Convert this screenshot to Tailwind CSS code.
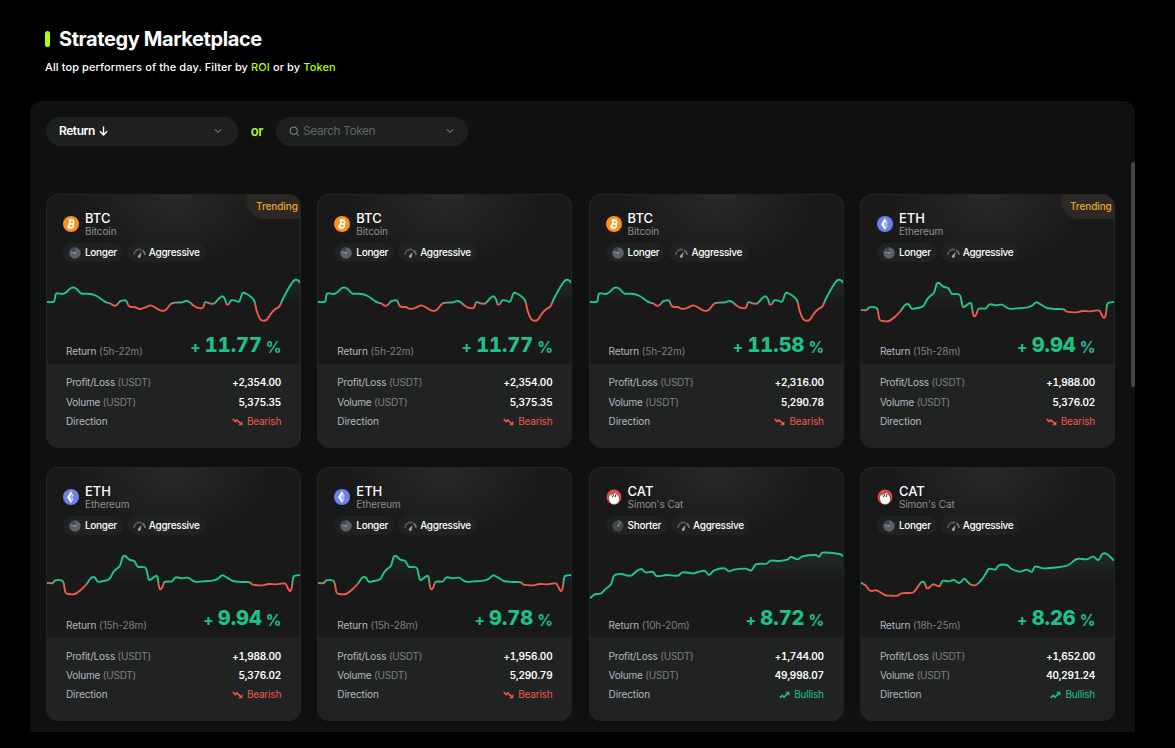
<!DOCTYPE html>
<html lang="en">

<head>
  <meta charset="UTF-8">
  <meta name="viewport" content="width=device-width, initial-scale=1.0">
  <title>Strategy Marketplace</title>
  <script src="https://cdn.jsdelivr.net/npm/@tailwindcss/browser@4"></script>
</head>

<body class="h-screen overflow-hidden bg-black font-[Inter,sans-serif] text-white">
  <!-- Icon sprite -->
  <svg class="hidden">
    <symbol id="coin-btc" viewBox="0 0 16 16">
      <circle cx="8" cy="8" r="8" fill="#f7931a"/>
      <g transform="rotate(13 8 8)" fill="none" stroke="#fff">
        <path d="M6.4 4.6h2.3a1.6 1.6 0 0 1 0 3.3H6.4h2.8a1.75 1.75 0 0 1 0 3.5H6.4z" stroke-width="1.6"/>
        <path d="M4.6 4.6h2M4.6 11.4h2" stroke-width="1.4"/>
        <path d="M7.1 2.6v2M9 2.6v2M7.1 11.4v2M9 11.4v2" stroke-width="1.1"/>
      </g>
    </symbol>
    <symbol id="coin-eth" viewBox="0 0 16 16">
      <circle cx="8" cy="8" r="8" fill="#6b83e8"/>
      <path d="M8 2 4 8.2 8 14z" fill="#fff"/>
      <path d="M8 2v4.2l3.2 1.6zM8 14v-3l3.2-2z" fill="#fff" fill-opacity=".75"/>
      <path d="M10.4 7.4 8.6 6.7a1.5 1.5 0 0 0 0 3l1.8-.7" fill="none" stroke="#6b83e8" stroke-width=".8"/>
      <path d="M9 6.6v3.2" stroke="#fff" stroke-width=".8"/>
    </symbol>
    <symbol id="coin-cat" viewBox="0 0 16 16">
      <circle cx="8" cy="8" r="7.4" fill="#f04a3e"/>
      <path d="M2.6 9.2C2.6 7 3.6 5.8 4.6 4.2L6.6 5 10.6 3l.9 2.6c1 1.2 2 2.6 2 4.6 0 3.2-2.4 5.3-5.5 5.3s-5.4-2.6-5.4-6.3z" fill="#fff" stroke="#2a1a1a" stroke-width=".5"/>
      <path d="M4.9 5.2l.4 1.3M7.3 5.4v1.8M10.3 4.6 9.4 6.8" stroke="#111" stroke-width=".9" fill="none"/>
      <circle cx="6.4" cy="7.6" r=".55" fill="#111"/>
      <circle cx="9.2" cy="7.4" r=".55" fill="#111"/>
    </symbol>
    <symbol id="longer" viewBox="0 0 12 12">
      <circle cx="6" cy="6" r="5.7" fill="#5c6169"/>
      <path d="M6 6V.3A5.7 5.7 0 0 0 .8 3.8z" fill="#41464b"/>
      <path d="M6 6 2.2 4.9" stroke="#9097a0" stroke-width=".9" stroke-linecap="round"/>
      <circle cx="6" cy="6" r=".8" fill="#a9afb8"/>
    </symbol>
    <symbol id="shorter" viewBox="0 0 12 12">
      <circle cx="6" cy="6" r="5.7" fill="#41464b"/>
      <path d="M6 6V.3a5.7 5.7 0 0 1 4.1 1.7z" fill="#5c6169"/>
      <path d="M6 6l2.8-2.8" stroke="#9097a0" stroke-width=".9" stroke-linecap="round"/>
      <circle cx="6" cy="6" r=".8" fill="#a9afb8"/>
    </symbol>
    <symbol id="gauge" viewBox="0 0 13 11">
      <path d="M1 8a5.5 5.5 0 0 1 7.4-5.2" fill="none" stroke="#565b62" stroke-width="1.6"/>
      <path d="M9.3 3.2A5.5 5.5 0 0 1 12 8" fill="none" stroke="#6b7179" stroke-width="1.6"/>
      <path d="M8.6 5 7.8 9.2a1.5 1.5 0 1 1-2.3-1z" fill="#9aa1aa"/>
    </symbol>
    <symbol id="bearish" viewBox="0 0 11 8">
      <path d="M.7 1l2.6 2.6L4.8 1.9 8.8 5.8" fill="none" stroke="currentColor" stroke-width="1.6"/>
      <path d="M10.4 2.9v4.3H6.2z" fill="currentColor"/>
    </symbol>
    <symbol id="bullish" viewBox="0 0 11 8">
      <path d="M.7 6.8l2.6-2.5 1.7 1.9L8.8 2.2" fill="none" stroke="currentColor" stroke-width="1.6"/>
      <path d="M10.4 5V.8H6.2z" fill="currentColor"/>
    </symbol>
    <symbol id="chevron" viewBox="0 0 8 6">
      <path d="M.8 1.2 4 4.5l3.2-3.3" fill="none" stroke="currentColor" stroke-width="1"/>
    </symbol>
  </svg>

  <!-- Page heading -->
  <header class="h-[101px] pt-7 pl-[45px]">
    <h1 class="flex h-[22px] items-center gap-[9px] text-[20px] font-bold tracking-[-0.4px]">
      <span class="h-4 w-[5px] rounded-full bg-[#b2ff00]"></span>
      Strategy Marketplace
    </h1>
    <p class="mt-[9px] text-[11px] leading-4 font-medium tracking-[0.1px]">All top performers of the day. Filter by <span class="text-[#b2ff00]">ROI</span> or by <span class="text-[#b2ff00]">Token</span></p>
  </header>

  <!-- Marketplace panel -->
  <main class="relative ml-[30px] h-[631px] w-[1105px] rounded-t-xl bg-[#0f1110] pt-4 pl-4">
    <!-- Filters -->
    <div class="flex h-[29px] items-center text-[12px]">
      <button class="flex h-full w-48 items-center rounded-full bg-[#1e201f] pr-4 pb-px pl-[13px] font-semibold tracking-[-0.45px]">
        Return
        <svg class="ml-1 h-[10px] w-[9px]" viewBox="0 0 9 10" fill="none" stroke="currentColor" stroke-width="1.4"><path d="M4.5.5v8.3M.9 5.3l3.6 3.6 3.6-3.6"/></svg>
        <svg class="ml-auto h-[6px] w-2 text-[#8b949c]"><use href="#chevron"/></svg>
      </button>
      <span class="w-[38px] text-center text-[13px] font-semibold tracking-[-0.3px] text-[#b2ff00]">or</span>
      <button class="flex h-full w-48 items-center rounded-full bg-[#1e201f] pr-[14px] pb-px pl-[13px] tracking-[-0.45px] text-[#60646a]">
        <svg class="mr-[3px] h-[11px] w-[11px]" viewBox="0 0 11 11" fill="none" stroke="#8b949c" stroke-width="1"><circle cx="4.7" cy="4.7" r="3.7"/><path d="M7.4 7.4l2.9 2.6"/></svg>
        Search Token
        <svg class="ml-auto h-[6px] w-2 text-[#8b949c]"><use href="#chevron"/></svg>
      </button>
    </div>

    <!-- Strategy cards, filled from the list below -->
    <div id="cards" class="mt-12 grid w-[1069px] grid-cols-4 gap-x-[16.2px] gap-y-[19.3px]"></div>

    <!-- Scrollbar thumb -->
    <div class="absolute top-[61px] right-0 h-[225px] w-1 rounded-full bg-[#434645]"></div>
  </main>

  <script>
    // Chart points are in thirds of a pixel, measured from the card's corner
    const charts = {
      btc: { base: 326, pts: [3,324, 18,324, 25,321, 29,301, 35,298, 50,300, 62,294, 75,282, 88,282, 105,298, 120,299, 134,300, 152,306, 168,317, 180,325, 192,328, 204,335, 212,333, 222,322, 234,319, 241,321, 249,337, 265,339, 280,345, 296,341, 314,334, 328,341, 345,350, 359,348, 374,330, 390,326, 408,325, 420,321, 430,324, 444,336, 458,342, 471,341, 477,325, 490,328, 505,328, 520,312, 530,307, 537,316, 541,330, 547,331, 556,319, 567,320, 580,322, 589,298, 602,300, 615,309, 625,322, 632,352, 642,375, 650,380, 662,377, 675,358, 688,345, 700,337, 710,315, 725,287, 737,268, 746,258, 757,260, 762,267] },
      eth: { base: 349, pts: [3,348, 20,348, 28,340, 46,340, 53,348, 58,375, 67,381, 87,381, 104,369, 122,351, 135,333, 146,331, 155,344, 170,342, 190,336, 202,315, 212,305, 222,296, 230,270, 237,267, 250,278, 265,283, 275,299, 300,304, 308,337, 315,337, 326,329, 334,329, 339,360, 343,367, 349,360, 355,345, 378,343, 388,331, 408,334, 425,332, 447,344, 470,343, 500,341, 516,335, 528,325, 543,332, 560,342, 590,345, 611,346, 620,353, 650,355, 667,351, 690,352, 718,350, 725,363, 731,372, 737,362, 741,332, 748,326, 762,324] },
      cat: { base: 999, pts: [3,394, 16,383, 36,379, 48,367, 66,352, 74,328, 84,322, 98,321, 112,325, 128,325, 145,311, 157,306, 169,316, 192,315, 202,327, 232,324, 267,326, 280,316, 315,319, 330,314, 348,312, 360,324, 375,310, 407,304, 420,313, 434,308, 470,305, 487,310, 500,292, 532,290, 545,281, 570,282, 595,278, 605,270, 626,277, 640,268, 680,264, 690,269, 699,257, 752,261, 765,270] },
      cat2: { base: 350, pts: [3,347, 16,355, 30,371, 50,370, 74,384, 88,386, 112,386, 124,379, 160,376, 171,363, 182,347, 192,346, 200,363, 207,362, 219,352, 229,355, 239,357, 247,342, 267,343, 281,339, 298,348, 313,335, 322,344, 332,353, 348,354, 368,334, 378,318, 386,306, 407,307, 416,295, 440,294, 455,306, 480,314, 500,308, 516,314, 524,299, 550,304, 600,300, 625,294, 650,276, 680,277, 700,269, 715,279, 727,261, 740,261, 762,281] }
    };

    const cards = [
      { coin: 'btc', sym: 'BTC', name: 'Bitcoin', term: 'Longer', time: '5h-22m', roi: '11.77', pnl: '+2,354.00', vol: '5,375.35', dir: 'Bearish', hot: true },
      { coin: 'btc', sym: 'BTC', name: 'Bitcoin', term: 'Longer', time: '5h-22m', roi: '11.77', pnl: '+2,354.00', vol: '5,375.35', dir: 'Bearish' },
      { coin: 'btc', sym: 'BTC', name: 'Bitcoin', term: 'Longer', time: '5h-22m', roi: '11.58', pnl: '+2,316.00', vol: '5,290.78', dir: 'Bearish' },
      { coin: 'eth', sym: 'ETH', name: 'Ethereum', term: 'Longer', time: '15h-28m', roi: '9.94', pnl: '+1,988.00', vol: '5,376.02', dir: 'Bearish', hot: true },
      { coin: 'eth', sym: 'ETH', name: 'Ethereum', term: 'Longer', time: '15h-28m', roi: '9.94', pnl: '+1,988.00', vol: '5,376.02', dir: 'Bearish' },
      { coin: 'eth', sym: 'ETH', name: 'Ethereum', term: 'Longer', time: '15h-28m', roi: '9.78', pnl: '+1,956.00', vol: '5,290.79', dir: 'Bearish' },
      { coin: 'cat', sym: 'CAT', name: "Simon's Cat", term: 'Shorter', time: '10h-20m', roi: '8.72', pnl: '+1,744.00', vol: '49,998.07', dir: 'Bullish' },
      { coin: 'cat', sym: 'CAT', name: "Simon's Cat", term: 'Longer', time: '18h-25m', roi: '8.26', pnl: '+1,652.00', vol: '40,291.24', dir: 'Bullish', chart: 'cat2' }
    ];

    // Smooth curve through the points (Catmull-Rom)
    function linePath(flat) {
      const p = [];
      for (let i = 0; i < flat.length; i += 2) p.push([flat[i] / 3, flat[i + 1] / 3]);
      let d = `M${p[0]}`;
      for (let i = 1; i < p.length; i++) {
        const a = p[i - 2] || p[i - 1], b = p[i - 1], c = p[i], e = p[i + 1] || c;
        const h = (c[0] - b[0]) / 3;
        const m1 = (c[1] - a[1]) / (c[0] - a[0]);
        const m2 = (e[1] - b[1]) / (e[0] - b[0]);
        d += `C${b[0] + h} ${b[1] + m1 * h} ${c[0] - h} ${c[1] - m2 * h} ${c}`;
      }
      return d;
    }

    function chartSvg(key) {
      const c = charts[key];
      const b = Math.min(c.base / 3, 160);
      const d = linePath(c.pts);
      return `
        <svg class="h-[68px] w-full" viewBox="1 68 253 68" preserveAspectRatio="none">
          <linearGradient id="line-${key}" gradientUnits="userSpaceOnUse" x1="0" y1="${b - 1}" x2="0" y2="${b + 1}">
            <stop offset=".5" stop-color="#1fc78b"/><stop offset=".5" stop-color="#ee5a4c"/>
          </linearGradient>
          <linearGradient id="fill-${key}" gradientUnits="userSpaceOnUse" x1="0" y1="84" x2="0" y2="${Math.min(b, 116)}">
            <stop offset="0" stop-color="#5c8f7c" stop-opacity=".15"/><stop offset="1" stop-color="#5c8f7c" stop-opacity="0"/>
          </linearGradient>
          <path d="${d}V${Math.min(b, 125)}H1z" fill="url(#fill-${key})"/>
          <path d="${d}" fill="none" stroke="url(#line-${key})" stroke-width="1.9" stroke-linejoin="round"/>
        </svg>`;
    }

    document.getElementById('cards').innerHTML = cards.map(c => `
      <article class="relative flex h-[254px] flex-col overflow-hidden rounded-xl border border-[#242625] bg-[#191919] bg-[radial-gradient(ellipse_100px_72px_at_50%_0,#282928,#191919)]">
        ${c.hot ? '<span class="absolute top-0 right-0 h-6 w-[53px] rounded-bl-[18px] bg-[#2d2823] pl-[9px] text-[10px] leading-[23px] font-medium tracking-[-0.1px] text-[#e9a72c]">Trending</span>' : ''}
        <div class="flex h-12 items-center gap-[6px] pt-[10px] pl-4">
          <svg class="h-4 w-4"><use href="#coin-${c.coin}"/></svg>
          <div>
            <h2 class="text-[13px] leading-[14px] font-medium">${c.sym}</h2>
            <p class="text-[10px] leading-3 tracking-[-0.1px] text-[#8b9197]">${c.name}</p>
          </div>
        </div>
        <div class="flex h-[19px] gap-1 pl-4 text-[10px] font-medium tracking-[-0.3px]">
          <span class="flex items-center gap-1 rounded-full bg-[#202221] px-[6px]"><svg class="h-3 w-3"><use href="#${c.term.toLowerCase()}"/></svg>${c.term}</span>
          <span class="flex items-center gap-[3px] rounded-full bg-[#202221] px-[6px]"><svg class="h-[11px] w-[13px]"><use href="#gauge"/></svg>Aggressive</span>
        </div>
        ${chartSvg(c.chart || c.coin)}
        <div class="flex flex-1 items-end justify-between px-[19px] pb-[4.6px]">
          <p class="text-[10px] leading-[15px] tracking-[-0.12px] text-[#b3b9c0]">Return <span class="text-[#7a8086]">(${c.time})</span></p>
          <p class="flex items-baseline gap-1 pb-px font-extrabold text-[#1fc08a]"><span class="relative top-px text-[16px] font-bold">+</span><span class="text-[20px] leading-6 tabular-nums">${c.roi}</span><span class="relative top-px text-[15.5px] font-bold tracking-[-0.5px]">%</span></p>
        </div>
        <dl class="h-[83px] bg-[#212322] px-[19px] pt-[9.4px] text-[10px] leading-[19.3px] tracking-[-0.2px] text-[#b3b9c0]">
          <div class="flex justify-between"><dt>Profit/Loss <span class="text-[#7a8086]">(USDT)</span></dt><dd class="font-semibold text-white tabular-nums">${c.pnl}</dd></div>
          <div class="flex justify-between"><dt>Volume <span class="text-[#7a8086]">(USDT)</span></dt><dd class="font-semibold text-white tabular-nums">${c.vol}</dd></div>
          <div class="flex justify-between"><dt class="tracking-[-0.1px]">Direction</dt><dd class="flex items-center gap-1 ${c.dir === 'Bearish' ? 'text-[#ee5a4c]' : 'text-[#1fc08a]'}"><svg class="h-2 w-[11px]"><use href="#${c.dir.toLowerCase()}"/></svg>${c.dir}</dd></div>
        </dl>
      </article>`).join('');
  </script>
</body>

</html>
